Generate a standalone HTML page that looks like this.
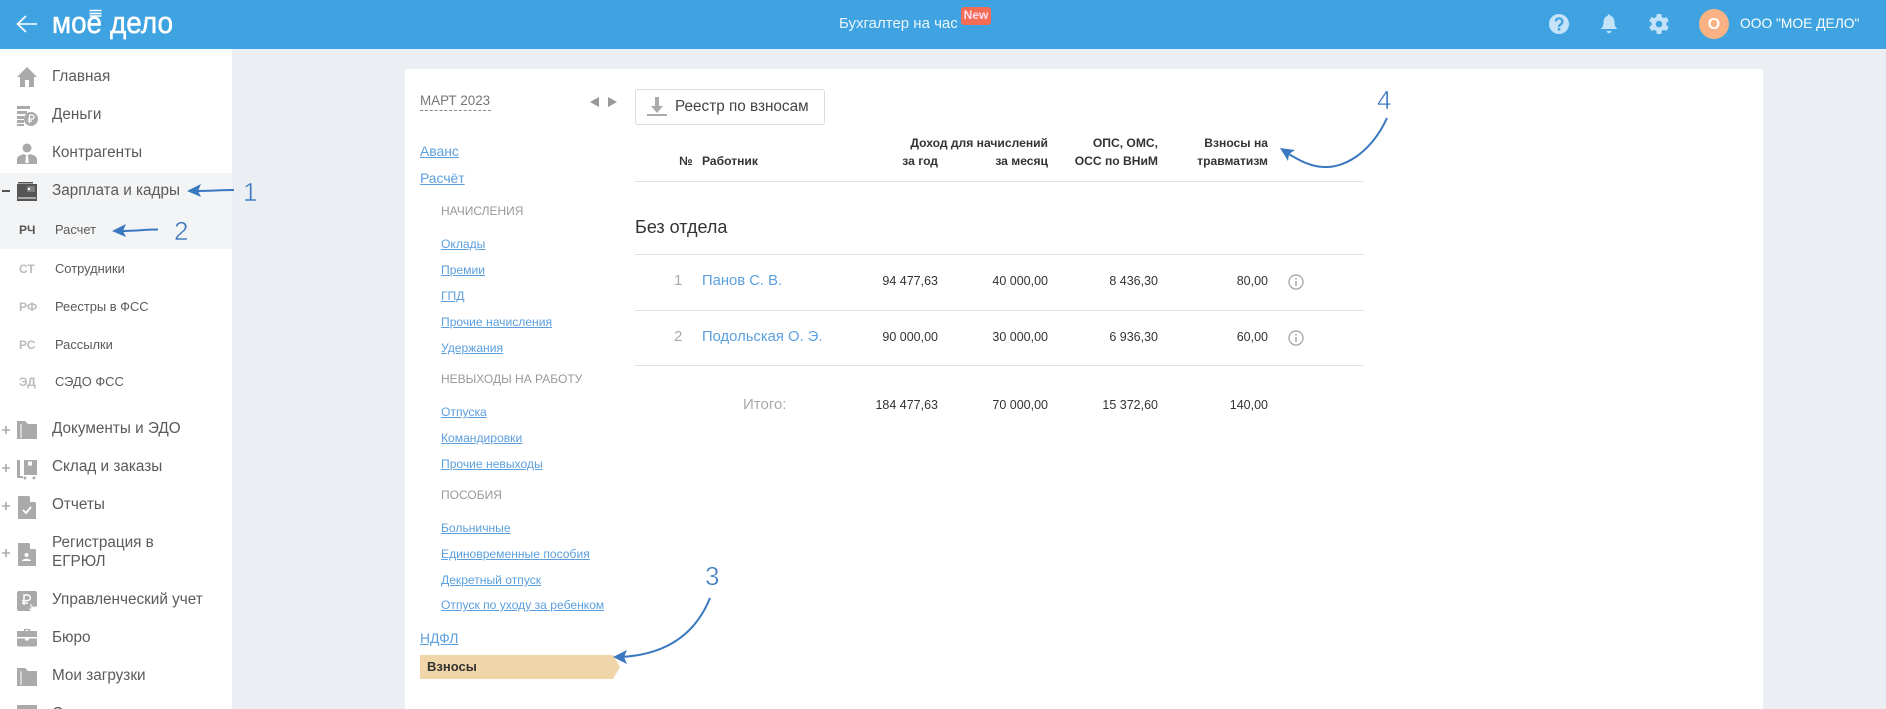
<!DOCTYPE html>
<html lang="ru"><head><meta charset="utf-8"><title>Моё дело</title>
<style>
html,body{margin:0;padding:0;width:1886px;height:709px;overflow:hidden;background:#ebeff3;font-family:"Liberation Sans",Arial,sans-serif}
.a{position:absolute}
.t{position:absolute;white-space:nowrap;height:20px;line-height:20px}
#hd{left:0;top:0;width:1886px;height:49px;background:#3ea3e0}
#sb{left:0;top:49px;width:232px;height:660px;background:#fff}
#hl{left:0;top:173px;width:232px;height:76px;background:#f3f4f5}
#card{left:405px;top:69px;width:1358px;height:640px;background:#fff}
.m{left:52px;font-size:15.3px;color:#5a5a5a}
.s{left:55px;font-size:12.9px;color:#5a5a5a}
.ab{left:19px;font-size:12px;font-weight:bold;color:#bbb}
.l1{left:420px;font-size:13.9px;color:#5b9fde;text-decoration:underline}
.l2{left:441px;font-size:12.1px;color:#5b9fde;text-decoration:underline}
.h{left:441px;font-size:12px;color:#999}
.th{font-size:12.1px;font-weight:bold;color:#333;text-align:right}
.v{font-size:12.5px;color:#333;text-align:right;width:100px}
.ln{left:635px;width:729px;height:1px;background:#e3e3e3}
.nm{left:702px;font-size:14.8px;color:#5b9fde}
.n{font-size:15px;color:#aaa}
svg{position:absolute;overflow:visible}
</style></head><body>
<div class="a" id="hd"></div><div class="a" id="sb"></div><div class="a" id="hl"></div><div class="a" id="card"></div>

<!-- header -->
<svg style="left:0;top:0" width="190" height="49"><path d="M37 24H18M26 16l-8.500 8 8.500 8" fill="none" stroke="#fff" stroke-width="1.600"/>
<g font-family="Liberation Sans" font-size="31" fill="#fff" stroke="#fff" stroke-width=".5">
<text x="52" y="33" textLength="50" lengthAdjust="spacingAndGlyphs">мое</text>
<text x="110" y="33" textLength="63" lengthAdjust="spacingAndGlyphs">дело</text></g>
<path d="M89.500 10.500h12M89.500 13.500h12M89.500 16h12" stroke="#fff" stroke-width="1.500"/></svg>
<div class="t" style="left:839px;top:14px;font-size:15px;color:#eaf6fd">Бухгалтер на час</div>
<div class="a" style="left:961px;top:7px;width:30px;height:18px;border-radius:3px;background:#f56c55;color:#fde;font-size:12px;font-weight:bold;text-align:center;line-height:17px">New</div>
<svg style="left:1549px;top:14px" width="20" height="20"><circle cx="10" cy="10" r="10" fill="#c5e3f8"/><path d="M6.800 7.500a3.300 3.200 0 1 1 5 2.800c-1.200.8-1.800 1.200-1.800 2.700" fill="none" stroke="#3ea3e0" stroke-width="2.200"/><rect x="8.800" y="14" width="2.500" height="2.500" fill="#3ea3e0"/></svg>
<svg style="left:1600px;top:14px" width="18" height="20"><path d="M9 0.500c1 0 1.500.7 1.500 1.500 3 .8 4 3.500 4 6.500 0 3 1 5 3 6.500H.5c2-1.500 3-3.500 3-6.500 0-3 1-5.700 4-6.500C7.500 1.200 8 .5 9 .5z" fill="#c5e3f8"/><path d="M6.500 17h5c-.5 1.500-1.500 2.200-2.500 2.200S7 18.500 6.500 17z" fill="#c5e3f8"/></svg>
<svg style="left:1649px;top:14px" width="20" height="20" viewBox="-10 -10 20 20"><g fill="#c5e3f8"><circle r="7.500"/><rect x="-2.500" y="-10" width="5" height="20" rx="1"/><rect x="-2.500" y="-10" width="5" height="20" rx="1" transform="rotate(60)"/><rect x="-2.500" y="-10" width="5" height="20" rx="1" transform="rotate(120)"/></g><circle r="3.300" fill="#3ea3e0"/></svg>
<div class="a" style="left:1699px;top:9px;width:30px;height:30px;border-radius:50%;background:#fab284;color:#fff;font-size:16px;font-weight:bold;text-align:center;line-height:31px">О</div>
<div class="t" style="left:1740px;top:14px;font-size:13.800px;color:#fff">ООО "МОЕ ДЕЛО"</div>

<!-- sidebar text -->
<div class="t m" style="top:67px">Главная</div>
<div class="t m" style="top:105px">Деньги</div>
<div class="t m" style="top:143px">Контрагенты</div>
<div class="t m" style="top:181px">Зарплата и кадры</div>
<div class="t ab" style="top:220px;color:#555">РЧ</div><div class="t s" style="top:220px">Расчет</div>
<div class="t ab" style="top:259px">СТ</div><div class="t s" style="top:259px">Сотрудники</div>
<div class="t ab" style="top:297px">РФ</div><div class="t s" style="top:297px">Реестры в ФСС</div>
<div class="t ab" style="top:335px">РС</div><div class="t s" style="top:335px">Рассылки</div>
<div class="t ab" style="top:372px">ЭД</div><div class="t s" style="top:372px">СЭДО ФСС</div>
<div class="t m" style="top:419px">Документы и ЭДО</div>
<div class="t m" style="top:457px">Склад и заказы</div>
<div class="t m" style="top:495px">Отчеты</div>
<div class="t m" style="top:533px">Регистрация в</div>
<div class="t m" style="top:552px">ЕГРЮЛ</div>
<div class="t m" style="top:590px">Управленческий учет</div>
<div class="t m" style="top:628px">Бюро</div>
<div class="t m" style="top:666px">Мои загрузки</div>
<div class="t m" style="top:704px;height:5px;overflow:hidden">Справочники</div>
<div class="a" style="left:2px;top:190px;width:8px;height:2px;background:#555"></div>
<svg style="left:0;top:0" width="12" height="709"><path d="M2 430h8M6 426v8M2 468h8M6 464v8M2 506h8M6 502v8M2 553h8M6 549v8" stroke="#aaa" stroke-width="1.600"/></svg>

<!-- sidebar icons -->
<svg style="left:0;top:0" width="45" height="709" fill="#aaa">
<path d="M27 67l10 10h-3v10h-5v-7h-4v7h-5V77h-3z"/>
<path d="M17 106h13v3H17zM17 111h10v3H17zM17 116h7v3h-7zM17 120h7v3h-7zM17 124h7v2h-7z"/><circle cx="31" cy="119" r="7"/><path d="M29.500 123v-8h2.500a2 2 0 0 1 0 4h-4M28 121h4" fill="none" stroke="#fff" stroke-width="1.200"/>
<circle cx="27" cy="148" r="4.500"/><path d="M17 164v-5c0-3 4-4 7-5l3 2 3-2c3 1 7 2 7 5v5z"/><path d="M26 156h2l.700 7h-3.400z" fill="#fff"/>
<path fill="#555" d="M17 184h20v17H17zM18 182h15v1.500H18z"/><rect x="27" y="186" width="8" height="6" rx="1" fill="#fff" opacity=".25"/><circle cx="29" cy="189" r="1.200" fill="#fff"/><path d="M18 198h18" stroke="#fff" stroke-width="1"/>
<path d="M17 421h8l3 3h9v15H17z"/><path d="M20 425h1v13" stroke="#fff" stroke-width="1" fill="none"/>
<path d="M17 460h3v16h3v2h-6zM24 460h13v15H24z"/><rect x="28" y="461.500" width="4" height="4" fill="#fff"/><circle cx="25" cy="478" r="1.500"/><circle cx="34" cy="478" r="1.500"/>
<path d="M18 496h11l7 7v16h-18z"/><path d="M30 496l6 6h-6z" fill="#fff"/><path d="M23 510l3 3 5-6" stroke="#fff" stroke-width="1.800" fill="none"/>
<path d="M18 543h11l7 7v16h-18z"/><path d="M30 543l6 6h-6z" fill="#fff"/><circle cx="26.500" cy="555" r="2" fill="#fff"/><path d="M22 561c.500-3 8.500-3 9 0z" fill="#fff"/>
<rect x="17" y="591" width="20" height="20" rx="2"/><path d="M24 605v-10h3.500a2.800 2.800 0 0 1 0 5.600H22M22 603h6" fill="none" stroke="#fff" stroke-width="1.500"/><path d="M37 611h-6l-2-2 8-3zM31 604l5 5" fill="#fff"/><path d="M31 604v3h3" stroke="#fff" fill="none"/>
<path d="M24 631v-2h6v2h7v6H17v-6zM25.500 631h3v-1h-3z"/><path d="M17 638.500h8v2h4v-2h8v6a2 2 0 0 1-2 2H19a2 2 0 0 1-2-2z"/>
<path d="M17 668h8l3 3h9v15H17z"/><path d="M20 672h1v13" stroke="#fff" stroke-width="1" fill="none"/>
<rect x="17" y="705" width="20" height="4"/>
</svg>

<!-- left column -->
<div class="t" style="left:420px;top:91px;font-size:13.400px;color:#777">МАРТ 2023</div>
<div class="a" style="left:420px;top:110px;width:71px;border-top:1px dashed #888"></div>
<svg style="left:590px;top:97px" width="28" height="11" fill="#999"><path d="M9 0v10L0 5zM18 0v10l9-5z"/></svg>
<div class="t l1" style="top:141px">Аванс</div>
<div class="t l1" style="top:168px">Расчёт</div>
<div class="t h" style="top:201px">НАЧИСЛЕНИЯ</div>
<div class="t l2" style="top:234px">Оклады</div>
<div class="t l2" style="top:260px">Премии</div>
<div class="t l2" style="top:286px">ГПД</div>
<div class="t l2" style="top:312px">Прочие начисления</div>
<div class="t l2" style="top:338px">Удержания</div>
<div class="t h" style="top:369px">НЕВЫХОДЫ НА РАБОТУ</div>
<div class="t l2" style="top:402px">Отпуска</div>
<div class="t l2" style="top:428px">Командировки</div>
<div class="t l2" style="top:454px">Прочие невыходы</div>
<div class="t h" style="top:485px">ПОСОБИЯ</div>
<div class="t l2" style="top:518px">Больничные</div>
<div class="t l2" style="top:544px">Единовременные пособия</div>
<div class="t l2" style="top:570px">Декретный отпуск</div>
<div class="t l2" style="top:595px">Отпуск по уходу за ребенком</div>
<div class="t l1" style="top:628px">НДФЛ</div>
<svg style="left:420px;top:655px" width="200" height="24"><path d="M0 0h193l7 12-7 12H0z" fill="#f0d5a8"/></svg>
<div class="t" style="left:427px;top:657px;font-size:13px;font-weight:bold;color:#333">Взносы</div>

<!-- button -->
<div class="a" style="left:635px;top:89px;width:188px;height:34px;border:1px solid #ddd;border-radius:3px"></div>
<svg style="left:647px;top:96px" width="20" height="21" fill="#aaa"><path d="M8 1h4v9h4l-6 7-6-7h4z"/><rect y="18" width="20" height="2"/></svg>
<div class="t" style="left:675px;top:97px;font-size:15.300px;color:#444">Реестр по взносам</div>

<!-- table header -->
<div class="t th" style="left:679px;top:151px">№</div>
<div class="t th" style="left:702px;top:151px">Работник</div>
<div class="t th" style="right:838px;top:133px">Доход для начислений</div>
<div class="t th" style="right:948px;top:151px">за год</div>
<div class="t th" style="right:838px;top:151px">за месяц</div>
<div class="t th" style="right:728px;top:133px">ОПС, ОМС,</div>
<div class="t th" style="right:728px;top:151px">ОСС по ВНиМ</div>
<div class="t th" style="right:618px;top:133px">Взносы на</div>
<div class="t th" style="right:618px;top:151px">травматизм</div>
<div class="a ln" style="top:181px"></div>
<div class="t" style="left:635px;top:217px;font-size:18px;color:#333">Без отдела</div>
<div class="a ln" style="top:254px"></div>

<!-- rows -->
<div class="t n" style="left:674px;top:271px">1</div>
<div class="t nm" style="top:271px">Панов С. В.</div>
<div class="t v" style="left:838px;top:271px">94 477,63</div>
<div class="t v" style="left:948px;top:271px">40 000,00</div>
<div class="t v" style="left:1058px;top:271px">8 436,30</div>
<div class="t v" style="left:1168px;top:271px">80,00</div>
<div class="a ln" style="top:310px"></div>
<div class="t n" style="left:674px;top:327px">2</div>
<div class="t nm" style="top:327px">Подольская О. Э.</div>
<div class="t v" style="left:838px;top:327px">90 000,00</div>
<div class="t v" style="left:948px;top:327px">30 000,00</div>
<div class="t v" style="left:1058px;top:327px">6 936,30</div>
<div class="t v" style="left:1168px;top:327px">60,00</div>
<div class="a ln" style="top:365px"></div>
<div class="t" style="left:743px;top:395px;font-size:15px;color:#aaa">Итого:</div>
<div class="t v" style="left:838px;top:395px">184 477,63</div>
<div class="t v" style="left:948px;top:395px">70 000,00</div>
<div class="t v" style="left:1058px;top:395px">15 372,60</div>
<div class="t v" style="left:1168px;top:395px">140,00</div>
<svg style="left:1288px;top:274px" width="16" height="72" fill="none" stroke="#aaa"><circle cx="8" cy="8" r="7" stroke-width="1.400"/><path d="M8 7v5M8 4v1.600" stroke-width="1.600"/><circle cx="8" cy="64" r="7" stroke-width="1.400"/><path d="M8 63v5M8 60v1.600" stroke-width="1.600"/></svg>

<!-- annotations -->
<svg style="left:0;top:0" width="1886" height="709" fill="none" stroke="#3a78bf" stroke-width="2">
<path d="M234 190C220 190 210 191 195 191"/><path d="M187 191l14-7-3 7 3 6z" fill="#3a78bf" stroke="none"/>
<path d="M158 229.500C145 229.500 135 231 120 231"/><path d="M112 231l14-7-3 7 3 6z" fill="#3a78bf" stroke="none"/>
<path d="M710 598C695 635 665 655 620 657"/><path d="M613 657l14-7-3 7 3 7z" fill="#3a78bf" stroke="none"/>
<path d="M1387 118C1370 155 1342 168 1325 167C1310 167 1297 159 1287 153"/><path d="M1280 148l15 2-6 4-1 7z" fill="#3a78bf" stroke="none"/>
<g fill="#3a78bf" font-family="Liberation Sans" font-size="26" stroke-width=".5" paint-order="fill">
<text x="243" y="201" stroke="#ebeff3">1</text><text x="174" y="240" stroke="#f3f4f5">2</text><text x="705" y="585" stroke="#fff">3</text><text x="1377" y="109" stroke="#fff">4</text></g>
</svg>
</body></html>
